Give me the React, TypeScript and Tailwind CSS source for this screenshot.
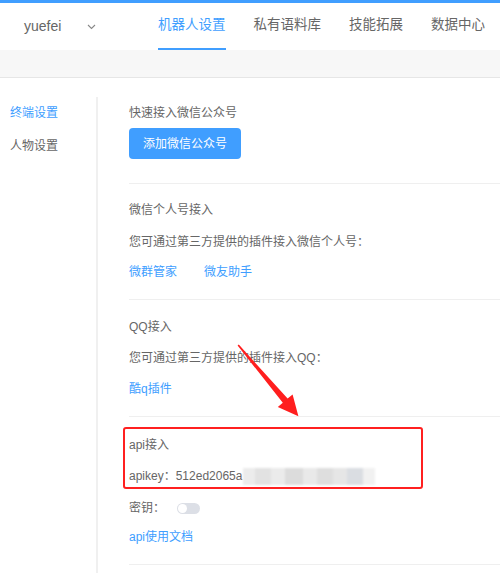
import React from 'react';

const tabs = ['机器人设置', '私有语料库', '技能拓展', '数据中心'];

function Divider() {
  return <div className="h-px bg-[#efefef]" />;
}

function Line({ children, className = '' }: { children: React.ReactNode; className?: string }) {
  return <div className={`h-5 leading-5 text-[12px] ${className}`}>{children}</div>;
}

export default function App() {
  return (
    <div className="relative w-[500px] h-[573px] overflow-hidden bg-white text-[#666] font-['Liberation_Sans','Noto_Sans_CJK_SC',sans-serif]">
      {/* top bar */}
      <div className="h-[3px] bg-[#409eff]" />

      {/* header */}
      <div className="h-[47px] flex items-stretch">
        <div className="flex items-center pl-[24px] w-[158px]">
          <span className="text-[14px] text-[#666]">yuefei</span>
          <svg className="ml-[26px] mt-[1px]" width="9" height="6" viewBox="0 0 9 6" fill="none">
            <path d="M1 1l3.5 3.5L8 1" stroke="#888" strokeWidth="1.1" />
          </svg>
        </div>
        <div className="flex gap-[28px]">
          {tabs.map((t, i) => (
            <div key={t} className="flex flex-col">
              <div
                className={`flex-1 flex items-center text-[13.5px] whitespace-nowrap ${
                  i === 0 ? 'text-[#409eff]' : 'text-[#666]'
                }`}
              >
                {t}
              </div>
              <div className={`h-[2px] ${i === 0 ? 'bg-[#409eff]' : 'bg-transparent'}`} />
            </div>
          ))}
        </div>
      </div>

      {/* gray band */}
      <div className="h-[28px] bg-[#f7f7f7] border-b border-[#e6e6e6]" />

      {/* body */}
      <div className="flex">
        <div className="w-[96px] pt-[25px] pl-[10px] flex flex-col gap-[13px]">
          <Line className="text-[#409eff]">终端设置</Line>
          <Line>人物设置</Line>
        </div>
        <div className="mt-[19px] w-[2px] h-[480px] bg-[#f0f0f0]" />
        <div className="flex-1 pl-[31px] pt-[25px]">
          <Line>快速接入微信公众号</Line>
          <button className="mt-[5px] w-[112px] h-[31px] rounded-[4px] bg-[#409eff] text-white text-[12px]">
            添加微信公众号
          </button>
          <div className="mt-[24px]">
            <Divider />
          </div>
          <Line className="mt-[16px]">微信个人号接入</Line>
          <Line className="mt-[12px]">您可通过第三方提供的插件接入微信个人号：</Line>
          <div className="mt-[10px] flex gap-[27px] text-[#409eff]">
            <Line>微群管家</Line>
            <Line>微友助手</Line>
          </div>
          <div className="mt-[17px]">
            <Divider />
          </div>
          <Line className="mt-[17px]">QQ接入</Line>
          <Line className="mt-[11px]">您可通过第三方提供的插件接入QQ：</Line>
          <Line className="mt-[11px] text-[#409eff]">酷q插件</Line>
          <div className="mt-[17px]">
            <Divider />
          </div>

          {/* highlighted api box */}
          <div className="mt-[10px] -ml-[6px] w-[300px] h-[62px] border-2 border-[#ff2020] rounded-[3px] pl-[4px] pt-[6px]">
            <Line>api接入</Line>
            <div className="mt-[11px] flex items-center h-5">
              <span className="text-[12px] leading-5 whitespace-nowrap">apikey：512ed2065a</span>
              <div className="relative ml-[1px] flex h-[17px] blur-[1px]">
                <div className="w-[12px] bg-[#ececec]" />
                <div className="w-[16px] bg-[#e2e2e2]" />
                <div className="w-[14px] bg-[#ebebeb]" />
                <div className="w-[18px] bg-[#dcdcdc]" />
                <div className="w-[14px] bg-[#e9e9e9]" />
                <div className="w-[16px] bg-[#dedede]" />
                <div className="w-[14px] bg-[#e6e6e6]" />
                <div className="w-[16px] bg-[#dadde2]" />
                <div className="w-[12px] bg-[#f1f1f1]" />
              </div>
            </div>
          </div>

          <div className="mt-[9px] flex items-center h-5">
            <span className="text-[12px]">密钥：</span>
            <div className="ml-[12px] w-[23px] h-[11px] rounded-full bg-[#dcdfe6] flex items-center px-[1px]">
              <div className="w-[9px] h-[9px] rounded-full bg-white" />
            </div>
          </div>
          <Line className="mt-[9px] text-[#409eff]">api使用文档</Line>
          <div className="mt-[17px]">
            <Divider />
          </div>
        </div>
      </div>

      {/* red arrow annotation */}
      <svg className="absolute inset-0 pointer-events-none" width="500" height="573" viewBox="0 0 500 573">
        <path
          d="M237.6 345.6 L238.8 344.6 L287.6 398.6 L292.6 394.6 L298.4 416.2 L277.8 407 L282.8 402.8 Z"
          fill="#ff1e1e"
        />
      </svg>
    </div>
  );
}
